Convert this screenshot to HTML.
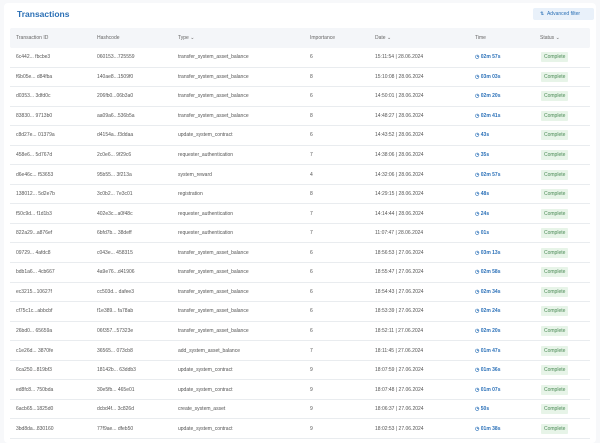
<!DOCTYPE html>
<html><head><meta charset="utf-8"><style>
*{margin:0;padding:0;box-sizing:border-box}
body{width:600px;height:440px;background:#f7f8fa;font-family:"Liberation Sans",sans-serif;overflow:hidden;position:relative}
.card{position:absolute;left:4px;top:3px;width:592px;height:440px;background:#fff;border-radius:4px}
.title{position:absolute;left:17px;top:9px;font-size:8.5px;font-weight:bold;color:#2a6fb5}
.btn{position:absolute;left:533px;top:8px;width:61px;height:12px;background:#e9f1fa;border-radius:2px;font-size:5px;color:#2a6fb5;line-height:12px;padding-left:7px}
.hdr{position:absolute;left:10px;top:28px;width:580px;height:20px;background:#f4f6f9;border-radius:2px}
.row{position:absolute;left:10px;width:580px;height:19.55px;border-bottom:1px solid #e9ecef}
.c{position:absolute;font-size:5px;color:#555;top:50%;transform:translateY(-50%);white-space:nowrap}
.h .c{color:#666}
.t{color:#2a70b8;font-weight:bold}
.st{background:#e7f4e8;color:#4a8a55;padding:2px 3px;border-radius:1px}
</style></head><body>
<div class="card"></div>
<div class="title">Transactions</div>
<div class="btn">⇅ &nbsp;Advanced filter</div>
<div class="hdr h">
<span class="c" style="left:6px">Transaction ID</span><span class="c" style="left:87px">Hashcode</span><span class="c" style="left:168px">Type ⌄</span><span class="c" style="left:300px">Importance</span><span class="c" style="left:365px">Date ⌄</span><span class="c" style="left:465px">Time</span><span class="c" style="left:530px">Status ⌄</span>
</div>
<div id="rows"></div>
<script>
var d=[
["6c442... fbcbe3","060153...725559","transfer_system_asset_balance","6","15:11:54 | 28.06.2024","02m 57s"],
["f6b05e... d84fba","140ae8...1509f0","transfer_system_asset_balance","8","15:10:08 | 28.06.2024","03m 03s"],
["d0353... 3dfd0c","206fb0...06b3a0","transfer_system_asset_balance","6","14:50:01 | 28.06.2024","02m 20s"],
["83830... 9713b0","aa09a6...536b5a","transfer_system_asset_balance","8","14:48:27 | 28.06.2024","02m 41s"],
["c8d27e... 01379a","d4154a...f3ddaa","update_system_contract","6","14:43:52 | 28.06.2024","43s"],
["458e6... 5d767d","2c0e6... 9f29c6","requester_authentication","7","14:38:06 | 28.06.2024","35s"],
["d6e46c... f53653","95b55... 3f213a","system_reward","4","14:32:06 | 28.06.2024","02m 57s"],
["138012... 5d2e7b","3c0b2... 7e3c01","registration","8","14:29:15 | 28.06.2024","48s"],
["f50c9d... f1d1b3","402e3c...a0f48c","requester_authentication","7","14:14:44 | 28.06.2024","24s"],
["822a29...a876ef","6bfd7b... 38deff","requester_authentication","7","11:07:47 | 28.06.2024","01s"],
["09729... 4afdc8","c043e... 458315","transfer_system_asset_balance","6","18:56:53 | 27.06.2024","03m 13s"],
["bdb1a6... 4cb667","4a9e76...d41906","transfer_system_asset_balance","6","18:55:47 | 27.06.2024","02m 58s"],
["ec3215...10627f","cc503d... dafee3","transfer_system_asset_balance","6","18:54:43 | 27.06.2024","02m 34s"],
["cf75c1c...abbcbf","f1e389... fa78ab","transfer_system_asset_balance","6","18:53:39 | 27.06.2024","02m 24s"],
["26bd0... 65659a","06f357...57323e","transfer_system_asset_balance","6","18:52:11 | 27.06.2024","02m 20s"],
["c1e26d... 3870fe","36565... 073cb8","add_system_asset_balance","7","18:11:45 | 27.06.2024","01m 47s"],
["6ca250...819bf3","18142b... 63ddb3","update_system_contract","9","18:07:59 | 27.06.2024","01m 36s"],
["ed8fc8... 750bda","30e5fb... 465e01","update_system_contract","9","18:07:48 | 27.06.2024","01m 07s"],
["6acb65...1825d0","dcbd4f... 3c826d","create_system_asset","9","18:06:37 | 27.06.2024","50s"],
["3bd8da...830160","77f9ae... dfeb50","update_system_contract","9","18:02:53 | 27.06.2024","01m 38s"]];
var h="";d.forEach(function(r,i){h+='<div class="row" style="top:'+(48+i*19.55)+'px"><span class="c" style="left:6px">'+r[0]+'</span><span class="c" style="left:87px">'+r[1]+'</span><span class="c" style="left:168px">'+r[2]+'</span><span class="c" style="left:300px">'+r[3]+'</span><span class="c" style="left:365px">'+r[4]+'</span><span class="c t" style="left:465px">◷ '+r[5]+'</span><span class="c st" style="left:531px">Complete</span></div>'});
document.getElementById("rows").innerHTML=h;
</script>
</body></html>
